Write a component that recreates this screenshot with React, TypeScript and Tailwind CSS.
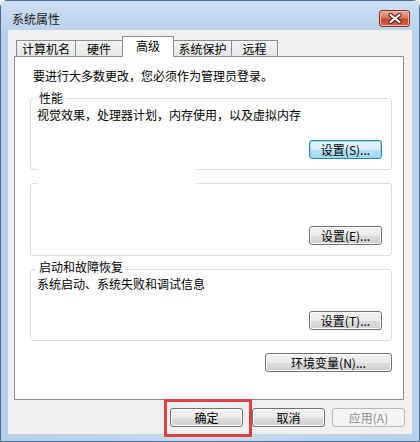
import type { ReactNode } from 'react';

type BtnKind = 'normal' | 'focus' | 'disabled';

function Button({ children, kind = 'normal', className = '' }: { children: ReactNode; kind?: BtnKind; className?: string }) {
  const look =
    kind === 'focus'
      ? 'border-[#3c7fb1] bg-[linear-gradient(#e8f6fd,#d6eefb_50%,#b6e0f6_50%,#a4d6f1)] shadow-[inset_0_0_0_1px_#7fe3fb] text-black'
      : kind === 'disabled'
        ? 'border-[#b5b8bb] bg-[#f4f4f4] text-[#8d8d8d]'
        : 'border-[#707070] bg-[linear-gradient(#f2f2f2,#ebebeb_50%,#dddddd_50%,#cfcfcf)] shadow-[inset_0_0_0_1px_#fcfcfc] text-black';
  return (
    <div className={`h-[19px] rounded-[3px] border flex items-center justify-center text-[12px] leading-[16px] ${look} ${className}`}>
      {children}
    </div>
  );
}

function Tab({ label, selected = false, width, first = false }: { label: string; selected?: boolean; width: string; first?: boolean }) {
  if (selected) {
    return (
      <div className={`${width} ${first ? '' : '-ml-px'} self-start h-[21px] relative z-10 bg-white border border-b-0 border-[#898c95] pt-[1px] text-center text-[12px] leading-[16px]`}>
        {label}
      </div>
    );
  }
  return (
    <div className={`${width} ${first ? '' : '-ml-px'} h-[16px] border border-b-0 border-[#898c95] bg-[linear-gradient(#f4f4f4,#e6e6e6)] text-center text-[12px] leading-[15px]`}>
      {label}
    </div>
  );
}

function Group({ label, desc, button, height, labelOffset = '-mt-[9px]' }: { label?: string; desc?: string; button: ReactNode; height: string; labelOffset?: string }) {
  return (
    <div className={`ml-[15px] w-[362px] ${height} border border-[#d5dfe5] rounded-[3px] flex flex-col`}>
      {label && (
        <div className={`self-start ml-[5px] px-[3px] bg-white ${labelOffset} h-[16px] leading-[16px]`}>{label}</div>
      )}
      {desc && <div className="pl-[6px] mt-[1px] h-[16px] leading-[16px]">{desc}</div>}
      <div className="mt-auto self-end mr-[9px] mb-[10px]">{button}</div>
    </div>
  );
}

function CloseIcon() {
  return (
    <svg width="14" height="11" viewBox="0 0 14 11">
      <path d="M2.5 2 L11.5 9 M11.5 2 L2.5 9" stroke="#5b2418" strokeWidth="4.2" strokeLinecap="round" />
      <path d="M2.5 2 L11.5 9 M11.5 2 L2.5 9" stroke="#ffffff" strokeWidth="2.2" strokeLinecap="round" />
    </svg>
  );
}

export default function App() {
  return (
    <div className="w-[420px] h-[442px] bg-white font-[family-name:'Noto_Sans_CJK_SC',sans-serif] text-[12px] text-black">
      <div className="relative w-[420px] h-[442px] rounded-t-[7px] border border-[#4d6d8f] bg-[linear-gradient(90deg,#b8cfe8,#c6daef_50%,#b8cfe8)] flex flex-col">
        {/* Title bar */}
        <div className="h-[29px] flex items-start justify-between bg-[linear-gradient(#cddff2,#bcd3eb)]">
          <div className="pl-[11px] pt-[10px] leading-[16px] text-[#1a1a1a]">系统属性</div>
          <div className="mt-[9px] mr-[9px] w-[31px] h-[17px] rounded-[3px] border border-[#7d3324] bg-[linear-gradient(#e9ab99,#d77a63_45%,#c6472d_55%,#d06c55)] shadow-[inset_0_0_0_1px_#eeb5a6] flex items-center justify-center">
            <CloseIcon />
          </div>
        </div>

        {/* Body */}
        <div className="ml-[7px] w-[404px] h-[404px] bg-[#f0f0f0] flex flex-col">
          <div className="mt-[6px] ml-[8px] h-[20px] flex items-end">
            <Tab label="计算机名" width="w-[60px]" first />
            <Tab label="硬件" width="w-[48px]" />
            <Tab label="高级" width="w-[52px]" selected />
            <Tab label="系统保护" width="w-[59px]" />
            <Tab label="远程" width="w-[47px]" />
          </div>

          <div className="relative ml-[6px] w-[390px] h-[344px] border border-[#898c95] bg-white flex flex-col">
            <div className="mt-[11px] pl-[18px] h-[16px] leading-[16px]">要进行大多数更改，您必须作为管理员登录。</div>

            <div className="mt-[14px]">
              <Group
                label="性能"
                desc="视觉效果，处理器计划，内存使用，以及虚拟内存"
                height="h-[72px]"
                button={<Button kind="focus" className="w-[73px]">设置(S)...</Button>}
              />
            </div>

            <div className="mt-[13px]">
              <Group height="h-[73px]" button={<Button className="w-[73px]">设置(E)...</Button>} />
            </div>

            <div className="mt-[13px]">
              <Group
                label="启动和故障恢复"
                desc="系统启动、系统失败和调试信息"
                height="h-[72px]"
                labelOffset="-mt-[11px]"
                button={<Button className="w-[73px]">设置(T)...</Button>}
              />
            </div>

            <div className="mt-[12px] ml-[15px] w-[362px] flex justify-end">
              <Button className="w-[127px]">环境变量(N)...</Button>
            </div>

            {/* white patch over the group borders */}
            <div className="absolute left-[22px] top-[110px] w-[160px] h-[20px] bg-white" />
          </div>

          <div className="mt-[8px] flex justify-end pr-[7px]">
            <Button className="w-[73px]">确定</Button>
            <Button className="ml-[9px] w-[73px]">取消</Button>
            <Button kind="disabled" className="ml-[7px] w-[73px]">应用(A)</Button>
          </div>
        </div>

        {/* red highlight box */}
        <div className="absolute left-[163px] top-[398px] w-[88px] h-[38px] border-[3px] border-[#e43f3f]" />
      </div>
    </div>
  );
}
